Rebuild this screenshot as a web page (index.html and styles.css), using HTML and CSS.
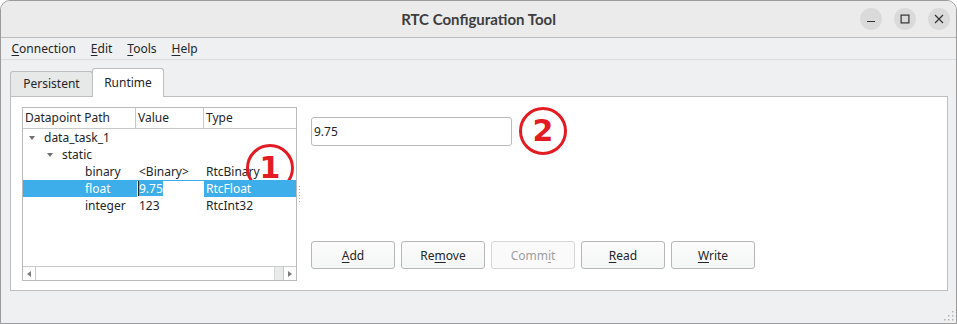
FILE: index.html
```html
<!DOCTYPE html>
<html lang="en">
<head>
  <meta charset="UTF-8" />
  <title>RTC Configuration Tool</title>
  <link rel="stylesheet" href="styles.css">
</head>
<body>
  <div class="window">
    <header class="titlebar">
      <span></span>
      <span class="title">RTC Configuration Tool</span>
      <div class="win-controls">
        <span class="win-btn">
          <svg width="10" height="10" viewBox="0 0 10 10"><path d="M1 7.5h8" stroke="#333" stroke-width="1.2" fill="none"/></svg>
        </span>
        <span class="win-btn">
          <svg width="10" height="10" viewBox="0 0 10 10"><rect x="1.1" y="1.1" width="7.8" height="7.8" stroke="#333" stroke-width="1.2" fill="none"/></svg>
        </span>
        <span class="win-btn">
          <svg width="10" height="10" viewBox="0 0 10 10"><path d="M1 1L9 9M9 1L1 9" stroke="#333" stroke-width="1.2" fill="none"/></svg>
        </span>
      </div>
    </header>

    <nav class="menubar">
      <span class="menu-item"><u>C</u>onnection</span>
      <span class="menu-item"><u>E</u>dit</span>
      <span class="menu-item"><u>T</u>ools</span>
      <span class="menu-item"><u>H</u>elp</span>
    </nav>

    <main class="content">
      <div class="tabbar">
        <div class="tab tab-persistent">Persistent</div>
        <div class="tab tab-runtime active">Runtime</div>
      </div>

      <div class="tab-pane">
        <div class="tree">
          <div class="tree-header">
            <div class="hcell">Datapoint Path</div>
            <div class="hcell">Value</div>
            <div class="hcell last">Type</div>
          </div>
          <div class="tree-body">
            <div class="row">
              <div class="cell path lvl0"><span class="arrow"></span>data_task_1</div>
              <div class="cell"></div>
              <div class="cell"></div>
            </div>
            <div class="row">
              <div class="cell path lvl1"><span class="arrow"></span>static</div>
              <div class="cell"></div>
              <div class="cell"></div>
            </div>
            <div class="row">
              <div class="cell path lvl2">binary</div>
              <div class="cell value">&lt;Binary&gt;</div>
              <div class="cell type">RtcBinary</div>
            </div>
            <div class="row selected">
              <div class="cell path lvl2">float</div>
              <div class="cell value editing">
                <div class="cell-editor"><span class="sel">9.75</span></div>
              </div>
              <div class="cell type">RtcFloat</div>
            </div>
            <div class="row">
              <div class="cell path lvl2">integer</div>
              <div class="cell value">123</div>
              <div class="cell type">RtcInt32</div>
            </div>

            <div class="marker marker-tree">1</div>
          </div>
          <div class="hscroll">
            <div class="sb-btn sb-left"><span class="tri-left"></span></div>
            <div class="sb-track"></div>
            <div class="sb-end"></div>
            <div class="sb-btn sb-right"><span class="tri-right"></span></div>
          </div>
        </div>

        <div class="splitter"><span class="splitter-dots"></span></div>

        <div class="side">
          <div class="edit-row">
            <input class="line-edit" type="text" value="9.75" />
            <div class="marker">2</div>
          </div>
          <div class="buttons">
            <button class="btn"><u>A</u>dd</button>
            <button class="btn">Re<u>m</u>ove</button>
            <button class="btn" disabled>Comm<u>i</u>t</button>
            <button class="btn"><u>R</u>ead</button>
            <button class="btn"><u>W</u>rite</button>
          </div>
        </div>
      </div>
    </main>

    <svg class="grip" width="12" height="12" viewBox="0 0 12 12">
      <rect x="9" y="1" width="1.5" height="1.5" fill="#b4b4b4"/>
      <rect x="5" y="5" width="1.5" height="1.5" fill="#b4b4b4"/>
      <rect x="9" y="5" width="1.5" height="1.5" fill="#b4b4b4"/>
      <rect x="1" y="9" width="1.5" height="1.5" fill="#b4b4b4"/>
      <rect x="5" y="9" width="1.5" height="1.5" fill="#b4b4b4"/>
      <rect x="9" y="9" width="1.5" height="1.5" fill="#b4b4b4"/>
    </svg>
  </div>
</body>
</html>
```

FILE: styles.css
```css
body {
  margin: 0;
  background: #fff;
  font-family: 'Noto Sans', 'DejaVu Sans', sans-serif;
  font-size: 12px;
  color: #232629;
}

.window {
  position: relative;
  width: 957px;
  height: 324px;
  box-sizing: border-box;
  border: 1px solid #9a9a9a;
  border-radius: 10px 10px 0 0;
  background: #eff0f1;
  overflow: hidden;
  display: flex;
  flex-direction: column;
}

.titlebar {
  height: 36px;
  flex: none;
  background: #ebebeb;
  border-bottom: 1px solid #bdbdbd;
  display: grid;
  grid-template-columns: 1fr auto 1fr;
  align-items: center;
}

.title {
  font-family: Lato, 'Noto Sans', sans-serif;
  font-weight: bold;
  font-size: 15px;
  color: #3d3d3d;
}

.win-controls {
  justify-self: end;
  display: flex;
  gap: 12px;
  padding-right: 6px;
}

.win-btn {
  width: 22px;
  height: 22px;
  border-radius: 50%;
  background: #dadada;
  display: flex;
  align-items: center;
  justify-content: center;
}

.menubar {
  height: 21px;
  flex: none;
  border-bottom: 1px solid #dcdcdc;
  display: flex;
  align-items: center;
  padding-left: 3px;
}

.menu-item {
  padding: 0 7.5px;
}

u {
  text-underline-offset: 2px;
}

.content {
  padding: 8px 8px 0 9px;
}

.tabbar {
  display: flex;
  align-items: flex-end;
  height: 28px;
}

.tab {
  box-sizing: border-box;
  border: 1px solid #bcbebf;
  border-bottom: none;
  border-radius: 3px 3px 0 0;
  text-align: center;
}

.tab-persistent {
  width: 83px;
  height: 25px;
  line-height: 24px;
  background: #e7e8e8;
}

.tab-runtime {
  width: 72px;
  height: 29px;
  line-height: 28px;
  margin-left: -1px;
  margin-bottom: -1px;
  background: #fff;
  position: relative;
  z-index: 1;
}

.tab-pane {
  border: 1px solid #bcbebf;
  background: #fff;
  display: flex;
  padding: 10px 11px 9px 11px;
}

/* tree view */
.tree {
  width: 275px;
  height: 174px;
  flex: none;
  box-sizing: border-box;
  border: 1px solid #b8babb;
  display: flex;
  flex-direction: column;
}

.tree-header {
  height: 20px;
  flex: none;
  border-bottom: 1px solid #c8c9ca;
  display: grid;
  grid-template-columns: 113px 68px 1fr;
}

.hcell {
  border-right: 1px solid #c8c9ca;
  padding-left: 2px;
  line-height: 20px;
}

.hcell.last {
  border-right: none;
}

.tree-body {
  flex: 1;
  position: relative;
  overflow: hidden;
}

.row {
  height: 17px;
  display: grid;
  grid-template-columns: 113px 68px 1fr;
  line-height: 17px;
  white-space: nowrap;
}

.row.selected {
  position: relative;
  z-index: 2;
  background: #3daee9;
  color: #fff;
}

.cell.path {
  display: flex;
  align-items: center;
}

.lvl0 { padding-left: 6px; }
.lvl1 { padding-left: 24px; }
.lvl2 { padding-left: 62px; }

.arrow {
  width: 0;
  height: 0;
  border-left: 3.5px solid transparent;
  border-right: 3.5px solid transparent;
  border-top: 4px solid #6f7072;
  margin-right: 9px;
}

.cell.value {
  padding-left: 3px;
}

.cell.type {
  padding-left: 2px;
}

.cell.editing {
  padding-left: 1px;
}

.cell-editor {
  height: 16px;
  margin-top: 1px;
  background: #fff;
  padding-left: 1px;
  line-height: 15px;
}

.sel {
  display: inline-block;
  border-left: 1px solid #232629;
  background: #3daee9;
  color: #fff;
  line-height: 15px;
}

.hscroll {
  height: 13px;
  flex: none;
  border-top: 1px solid #c8c9ca;
  display: flex;
}

.sb-btn {
  width: 12px;
  display: flex;
  align-items: center;
  justify-content: center;
}

.sb-left {
  border-right: 1px solid #c8c9ca;
}

.sb-right {
  border-left: 1px solid #c8c9ca;
}

.sb-track {
  flex: 1;
}

.sb-end {
  width: 8px;
  background: #e9eaea;
  border-left: 1px solid #d6d7d8;
}

.tri-left {
  border-top: 3.5px solid transparent;
  border-bottom: 3.5px solid transparent;
  border-right: 4px solid #7a7b7d;
}

.tri-right {
  border-top: 3.5px solid transparent;
  border-bottom: 3.5px solid transparent;
  border-left: 4px solid #7a7b7d;
}

.splitter {
  width: 14px;
  flex: none;
  display: flex;
  align-items: center;
}

.splitter-dots {
  width: 1px;
  height: 16px;
  margin-left: 2px;
  background: repeating-linear-gradient(to bottom, #a9abac 0 1px, transparent 1px 3px);
}

.side {
  flex: 1;
  display: flex;
  flex-direction: column;
  justify-content: space-between;
  padding-bottom: 12px;
}

.edit-row {
  display: flex;
  align-items: center;
  gap: 7px;
}

.line-edit {
  width: 201px;
  height: 29px;
  box-sizing: border-box;
  border: 1px solid #b8babc;
  border-radius: 3px;
  padding: 0 2px;
  font-family: inherit;
  font-size: 12px;
  color: #232629;
  background: #fff;
  outline: none;
}

.buttons {
  display: flex;
  gap: 6px;
}

.btn {
  width: 84px;
  height: 28px;
  box-sizing: border-box;
  border: 1px solid #b5b7b9;
  border-radius: 3px;
  background: linear-gradient(#fcfcfc, #f4f5f5);
  font-family: inherit;
  font-size: 12px;
  color: #232629;
  padding: 0;
}

.btn:disabled {
  border-color: #d5d6d7;
  color: #9d9fa1;
  background: #fafafa;
}

/* red numbered annotations */
.marker {
  width: 48px;
  height: 48px;
  box-sizing: border-box;
  flex: none;
  border: 3.5px solid #e31b23;
  border-radius: 50%;
  display: flex;
  align-items: center;
  justify-content: center;
  font-family: 'DejaVu Sans', sans-serif;
  font-weight: bold;
  font-size: 30px;
  color: #e31b23;
  line-height: 1;
}

.marker-tree {
  position: absolute;
  left: 223px;
  top: 15px;
  z-index: 1;
}

.grip {
  position: absolute;
  right: 1px;
  bottom: 1px;
}
```
